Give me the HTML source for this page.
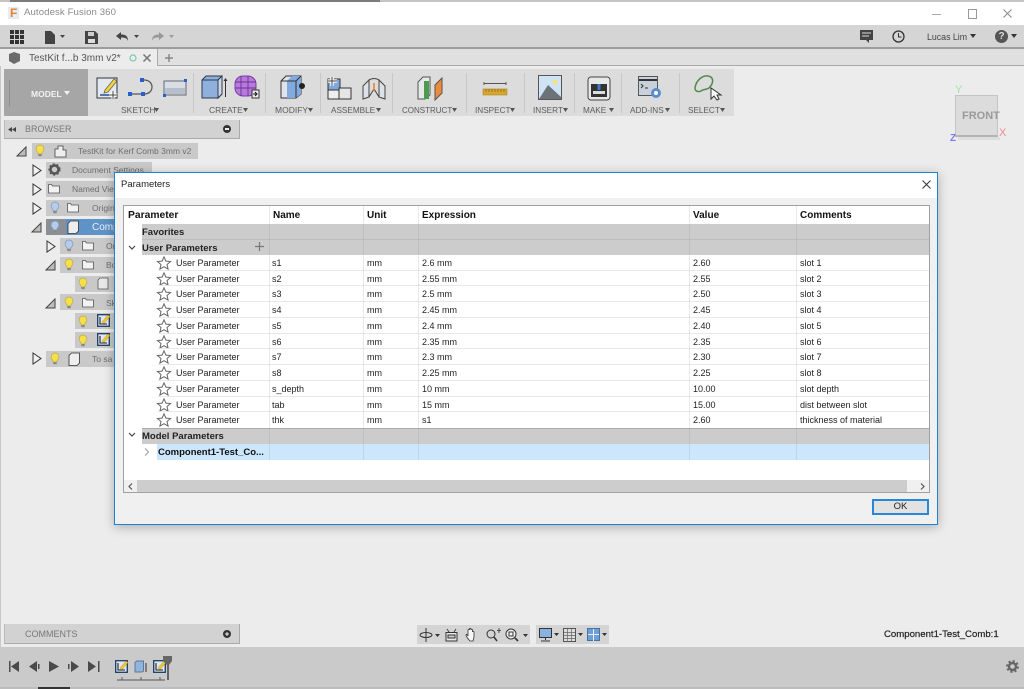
<!DOCTYPE html>
<html><head><meta charset="utf-8"><style>
html,body{margin:0;padding:0}
body{width:1024px;height:689px;overflow:hidden;position:relative;background:#ececec;font-family:"Liberation Sans",sans-serif;filter:blur(.3px)}
.a{position:absolute}
.t{position:absolute;white-space:nowrap;line-height:12px}
.rb{position:absolute;top:105px;font-size:8.5px;color:#5c5c5c;line-height:11px;white-space:nowrap}
.sep{position:absolute;top:73px;width:1px;height:40px;background:#c8c8c8}
.node{position:absolute;background:#c9c9c9;height:16px}
.nt{position:absolute;font-size:8.5px;color:#6e6e6e;white-space:nowrap;line-height:12px}
svg{position:absolute;overflow:visible}
.r{position:absolute;height:15.73px;font-size:9px;color:#222}
.r span{position:absolute;top:2px;line-height:12px;white-space:nowrap}
.ln{position:absolute;left:34px;right:0;bottom:0;height:1px;background:#e8e8e8}
.c1{left:52px}.c2{left:148px}.c3{left:243px}.c4{left:298px}.c5{left:569px}.c6{left:676px}
</style></head><body>
<svg width="0" height="0" style="position:absolute"><defs>
<g id="bulb"><path d="M5 1a4 4 0 0 1 2.500 7c-.6.6-.7 1.200-.7 2H3.200c0-.8-.1-1.400-.7-2A4 4 0 0 1 5 1z" fill="#f6e04a" stroke="#b9a94a" stroke-width=".7"/><rect x="3.300" y="10" width="3.400" height="2.200" fill="#888"/></g>
<g id="bulbb"><path d="M5 1a4 4 0 0 1 2.500 7c-.6.6-.7 1.200-.7 2H3.200c0-.8-.1-1.400-.7-2A4 4 0 0 1 5 1z" fill="#b5cdea" stroke="#7f98b8" stroke-width=".7"/><rect x="3.300" y="10" width="3.400" height="2.200" fill="#888"/></g>
<g id="fold"><path d="M.5 2.500h3l1 1.500h7v7h-11z" fill="#f2f2f2" stroke="#555" stroke-width=".8"/></g>
<g id="tri"><path d="M1 1l8 5.500-8 5.500z" fill="#f2f2f2" stroke="#333" stroke-width="1"/></g>
<g id="tro"><path d="M9 1v9H0z" fill="#bdbdbd" stroke="#444" stroke-width="1"/></g>
<g id="star"><path d="M7 .8l1.900 4.300 4.600.4-3.500 3 1.100 4.600L7 10.700l-4.100 2.400L4 8.500.5 5.500l4.600-.4z" fill="#fff" stroke="#666" stroke-width="1"/></g>
<g id="sk"><rect x=".7" y=".7" width="11.600" height="11.600" fill="#dfe6f0" stroke="#1c3c66" stroke-width="1.300"/><path d="M3 3v7h7" fill="none" stroke="#222" stroke-width="1.100"/><path d="M5 8l6-7 2 1.500-6 7z" fill="#f0cb2c" stroke="#a98c1a" stroke-width=".4"/></g>
</defs></svg>

<!-- title bar -->
<div class="a" style="left:0;top:0;width:1024px;height:25px;background:#fff"></div>
<div class="a" style="left:0;top:0;width:1024px;height:2px;background:#c4c4c4"></div>
<div class="a" style="left:10px;top:0;width:370px;height:2px;background:#7c7c7c"></div>
<div class="a" style="left:8px;top:7px;width:11px;height:12px;background:#e4edf5"></div>
<div class="t" style="left:10px;top:7px;font-size:12px;font-weight:bold;color:#e8822a">F</div>
<div class="t" style="left:24px;top:7px;font-size:9.600px;color:#8a8a8a;letter-spacing:.1px">Autodesk Fusion 360</div>
<div class="a" style="left:932px;top:14px;width:9px;height:1px;background:#aaa"></div>
<div class="a" style="left:968px;top:9px;width:7px;height:8px;border:1px solid #999"></div>
<svg style="left:1003px;top:9px" width="10" height="10"><path d="M.5.500l8 8M8.500.500l-8 8" stroke="#888" stroke-width="1"/></svg>

<!-- toolbar -->
<div class="a" style="left:0;top:25px;width:1024px;height:22px;background:#d5d5d5"></div>
<div class="a" style="left:0;top:47px;width:1024px;height:2px;background:#9c9c9c"></div>
<svg style="left:10px;top:30px" width="14" height="14"><g fill="#333"><rect width="4" height="4"/><rect x="5" width="4" height="4"/><rect x="10" width="4" height="4"/><rect y="5" width="4" height="4"/><rect x="5" y="5" width="4" height="4"/><rect x="10" y="5" width="4" height="4"/><rect y="10" width="4" height="4"/><rect x="5" y="10" width="4" height="4"/><rect x="10" y="10" width="4" height="4"/></g></svg>
<svg style="left:45px;top:31px" width="22" height="13"><path d="M0 0h6l4 4v9H0z" fill="#444"/><path d="M15 4h5l-2.500 3z" fill="#444"/></svg>
<svg style="left:85px;top:31px" width="13" height="13"><path d="M0 0h10l3 3v10H0z" fill="#444"/><rect x="3" y="1" width="6" height="4" fill="#ccc"/><rect x="3" y="8" width="7" height="4" fill="#ddd"/></svg>
<svg style="left:116px;top:32px" width="26" height="11"><path d="M0 4l5-4v2.500c4 0 7 1 7 6.500-1-3-3-3.500-7-3.500V8z" fill="#444"/><path d="M18 3h5l-2.500 3z" fill="#444"/></svg>
<svg style="left:152px;top:32px" width="26" height="11"><path d="M12 4L7 0v2.500C3 2.500 0 3.500 0 9c1-3 3-3.500 7-3.500V8z" fill="#999"/><path d="M17 3h5l-2.500 3z" fill="#999"/></svg>
<svg style="left:860px;top:30px" width="14" height="14"><path d="M0 0h13v10H9v3l-3-3H0z" fill="#444"/><path d="M2 3h9M2 6h7" stroke="#ddd"/></svg>
<svg style="left:892px;top:30px" width="13" height="13"><circle cx="6.500" cy="6.500" r="5.500" fill="none" stroke="#333" stroke-width="1.300"/><path d="M6.500 3v4h3" fill="none" stroke="#333"/></svg>
<div class="t" style="left:927px;top:31px;font-size:8.800px;color:#444">Lucas Lim</div>
<svg style="left:970px;top:34px" width="6" height="5"><path d="M0 0h6L3 4z" fill="#333"/></svg>
<div class="a" style="left:995px;top:30px;width:13px;height:13px;border-radius:50%;background:#555;color:#ddd;font-size:10px;font-weight:bold;line-height:13px;text-align:center">?</div>
<svg style="left:1011px;top:34px" width="6" height="5"><path d="M0 0h6L3 4z" fill="#333"/></svg>

<!-- tabs -->
<div class="a" style="left:0;top:49px;width:1024px;height:16px;background:#e0e0e0;border-bottom:1px solid #aaa"></div>
<div class="a" style="left:0;top:49px;width:157px;height:17px;background:#ececec"></div>
<div class="a" style="left:157px;top:49px;width:1px;height:16px;background:#aaa"></div>
<svg style="left:9px;top:52px" width="12" height="12"><path d="M0 2l5-2 6 2v7l-6 3-5-3z" fill="#6b6b6b"/></svg>
<div class="t" style="left:29px;top:53px;font-size:10px;color:#555">TestKit f...b 3mm v2*</div>
<svg style="left:129px;top:54px" width="9" height="9"><circle cx="4" cy="4" r="3" fill="none" stroke="#7fc4b0" stroke-width="1.200"/></svg>
<svg style="left:143px;top:54px" width="8" height="8"><path d="M.5.500l7 7M7.500.500l-7 7" stroke="#777" stroke-width="1.500"/></svg>
<svg style="left:164px;top:53px" width="10" height="10"><path d="M5 1v8M1 5h8" stroke="#777" stroke-width="1.200"/></svg>

<!-- ribbon -->
<div class="a" style="left:4px;top:69px;width:730px;height:47px;background:#dcdcdc"></div>
<div class="a" style="left:4px;top:69px;width:84px;height:47px;background:#a6a6a6"></div>
<div class="a" style="left:9px;top:80px;width:1px;height:26px;background:#8d8d8d"></div>
<div class="t" style="left:31px;top:88px;font-size:8.500px;font-weight:bold;color:#f3f3f3">MODEL</div>
<svg style="left:64px;top:91px" width="6" height="4"><path d="M0 0h6L3 4z" fill="#f3f3f3"/></svg>
<div class="sep" style="left:193px"></div><div class="sep" style="left:265px"></div><div class="sep" style="left:320px"></div><div class="sep" style="left:392px"></div><div class="sep" style="left:466px"></div><div class="sep" style="left:524px"></div><div class="sep" style="left:574px"></div><div class="sep" style="left:621px"></div><div class="sep" style="left:679px"></div>

<svg style="left:96px;top:77px" width="24" height="23"><rect x="1" y="1" width="20" height="20" fill="#e4e9f0" stroke="#334" stroke-width="1"/><path d="M4 18h14" stroke="#1f4f99" stroke-width="1.500"/><path d="M9 13l9-11 3 2-9 11-4 1z" fill="#f3d13a" stroke="#666" stroke-width=".8"/><path d="M17 14v8M13 18h8" stroke="#fff" stroke-width="3"/><path d="M17 14v8M13 18h8" stroke="#444"/></svg>
<svg style="left:128px;top:78px" width="26" height="20"><path d="M2 16h14c5 0 8-3 8-7s-3-7-8-7h-2" fill="none" stroke="#555" stroke-width="1.200"/><g fill="#2a5ecb"><rect x="0" y="14" width="4" height="4"/><rect x="13" y="14" width="4" height="4"/><rect x="12" y="0" width="4" height="4"/></g></svg>
<svg style="left:163px;top:79px" width="24" height="18"><rect x="1" y="2" width="22" height="14" fill="#d8dde6" stroke="#667"/><rect x="2" y="9" width="20" height="6" fill="#b8bfcc"/><rect x="21" y="0" width="3" height="3" fill="#2a5ecb"/><rect x="0" y="15" width="3" height="3" fill="#2a5ecb"/></svg>
<svg style="left:201px;top:75px" width="26" height="25"><path d="M1 5l4-4h16v18l-4 4H1z" fill="#8fb0dc" stroke="#2d3a4d"/><path d="M17 5v18M1 5h16l4-4" fill="none" stroke="#2d3a4d"/><path d="M17 5l4-4v18l-4 4z" fill="#cfd9e6" stroke="#2d3a4d"/><path d="M24.500 22V5" stroke="#333"/><path d="M22.500 6l2-3 2 3z" fill="#333"/></svg>
<svg style="left:235px;top:75px" width="26" height="25"><rect x="0" y="1" width="21" height="20" rx="8" fill="#b67ad9" stroke="#7a3ca8"/><path d="M0 7h21M0 13h21M6 1v20M13 1v20" stroke="#6e2f9c" stroke-width=".9"/><rect x="17" y="15" width="7" height="8" fill="#eee" stroke="#333"/><path d="M18 19h3M20 17l2 2-2 2" stroke="#111" fill="none"/></svg>
<svg style="left:280px;top:75px" width="26" height="25"><path d="M1 6l5-5h15v18l-5 4H1z" fill="#dfe4ea" stroke="#333"/><path d="M7 6l5-5h9v18l-5 4H7z" fill="#83aade"/><path d="M1 6h15v17M16 6l5-5" fill="none" stroke="#333"/><circle cx="22" cy="11" r="3" fill="#222"/></svg>
<svg style="left:327px;top:76px" width="25" height="24"><rect x="1" y="3" width="12" height="11" fill="#7ea7dc" stroke="#333"/><rect x="1" y="14" width="11" height="9" fill="#eee" stroke="#333"/><rect x="12" y="12" width="12" height="11" fill="#e6e6e6" stroke="#333"/><path d="M5 1v9M1 5h9" stroke="#fff" stroke-width="3.500"/><path d="M5 1v9M1 5h9" stroke="#444" stroke-width="1"/></svg>
<svg style="left:362px;top:77px" width="24" height="23"><path d="M1 9l6-6v17l-6 2zM23 9l-6-6v17l6 2z" fill="#dde2e8" stroke="#444"/><path d="M7 3c3-2 7-2 10 0M7 20l5-8 5 8" fill="none" stroke="#444"/><path d="M12 6v8" stroke="#e8822a" stroke-width="1.500"/></svg>
<svg style="left:417px;top:76px" width="26" height="24"><path d="M1 6l5-5h7v18l-5 4H1z" fill="#e8e8e8" stroke="#555"/><rect x="7" y="5" width="5" height="18" fill="#4e9a4e"/><path d="M18 9l7-7v15l-7 7z" fill="#ea8c3c" stroke="#555"/></svg>
<svg style="left:483px;top:82px" width="24" height="14"><path d="M1 1.500h22M1 0v3M23 0v3" stroke="#555"/><rect x="0" y="7" width="24" height="6" fill="#d9a72d" stroke="#a98520" stroke-width=".6"/><path d="M3 7v3M6 7v3M9 7v3M12 7v3M15 7v3M18 7v3M21 7v3" stroke="#7e6216" stroke-width=".7"/></svg>
<svg style="left:538px;top:75px" width="24" height="25"><rect x=".5" y=".5" width="23" height="24" fill="#cfe3f5" stroke="#555"/><circle cx="17" cy="7" r="2.500" fill="#f2e187"/><path d="M1 24l9-14 13 12v2z" fill="#6b7378"/></svg>
<svg style="left:587px;top:76px" width="24" height="25"><rect x="1" y="1" width="22" height="23" rx="3" fill="#e8e8e8" stroke="#444"/><rect x="4" y="8" width="16" height="13" fill="#333"/><rect x="6" y="15" width="12" height="3" fill="#ddd"/><path d="M12 8v6" stroke="#3c79c6" stroke-width="3"/></svg>
<svg style="left:638px;top:76px" width="25" height="24"><rect x=".5" y=".5" width="19" height="19" fill="#c8d0da" stroke="#555"/><path d="M1 4h18" stroke="#333" stroke-width="2"/><path d="M3 8l2 2-2 2M7 12h3" stroke="#333" fill="none"/><circle cx="18" cy="17" r="5" fill="#5a8ed0"/><circle cx="18" cy="17" r="2" fill="#fff"/></svg>
<svg style="left:693px;top:74px" width="30" height="28"><path d="M2 14C3 6 10 1 15 2c6 1 6 7 1 12-3 2-6 1-8 3-2 1-6 1-6-3z" fill="none" stroke="#4f8b4f" stroke-width="1.500"/><path d="M18 14v11l3-3 3 4 2-1-2-4h4z" fill="#fff" stroke="#333"/></svg>

<div class="rb" style="left:121px">SKETCH</div><svg style="left:154px;top:108px" width="5" height="4"><path d="M0 0h5L2.500 4z" fill="#555"/></svg>
<div class="rb" style="left:209px">CREATE</div><svg style="left:243px;top:108px" width="5" height="4"><path d="M0 0h5L2.500 4z" fill="#555"/></svg>
<div class="rb" style="left:275px">MODIFY</div><svg style="left:308px;top:108px" width="5" height="4"><path d="M0 0h5L2.500 4z" fill="#555"/></svg>
<div class="rb" style="left:331px;font-size:8.200px">ASSEMBLE</div><svg style="left:376px;top:108px" width="5" height="4"><path d="M0 0h5L2.500 4z" fill="#555"/></svg>
<div class="rb" style="left:402px;font-size:8px">CONSTRUCT</div><svg style="left:452px;top:108px" width="5" height="4"><path d="M0 0h5L2.500 4z" fill="#555"/></svg>
<div class="rb" style="left:475px;font-size:8.200px">INSPECT</div><svg style="left:510px;top:108px" width="5" height="4"><path d="M0 0h5L2.500 4z" fill="#555"/></svg>
<div class="rb" style="left:533px;font-size:8.200px">INSERT</div><svg style="left:563px;top:108px" width="5" height="4"><path d="M0 0h5L2.500 4z" fill="#555"/></svg>
<div class="rb" style="left:583px;font-size:8.200px">MAKE</div><svg style="left:609px;top:108px" width="5" height="4"><path d="M0 0h5L2.500 4z" fill="#555"/></svg>
<div class="rb" style="left:630px;font-size:8.200px">ADD-INS</div><svg style="left:665px;top:108px" width="5" height="4"><path d="M0 0h5L2.500 4z" fill="#555"/></svg>
<div class="rb" style="left:688px;font-size:8.200px">SELECT</div><svg style="left:720px;top:108px" width="5" height="4"><path d="M0 0h5L2.500 4z" fill="#555"/></svg>

<!-- view cube -->
<div class="a" style="left:955px;top:95px;width:43px;height:42px;background:#dcdcdc;border:1px solid #c4c4c4;border-bottom:2px solid #b4b4b4;box-sizing:border-box"></div>
<div class="a" style="left:958px;top:137px;width:42px;height:3px;background:#dedede"></div>
<div class="t" style="left:962px;top:110px;font-size:11px;font-weight:bold;color:#9a9a9a">FRONT</div>
<div class="t" style="left:955px;top:84px;font-size:11px;color:#9fe3a8">Y</div>
<div class="t" style="left:999px;top:127px;font-size:11px;color:#f08a8a">X</div>
<div class="t" style="left:950px;top:133px;font-size:10px;font-weight:bold;color:#7a7af0">Z</div>

<!-- left edge -->
<div class="a" style="left:0;top:66px;width:1px;height:581px;background:#c8c8c8"></div>

<!-- browser -->
<div class="a" style="left:4px;top:120px;width:236px;height:19px;background:#d2d2d2;box-shadow:inset 0 -1px #aaa,inset 1px 0 #bbb,inset -1px 0 #aaa"></div>
<svg style="left:8px;top:127px" width="8" height="5"><path d="M4 0v5L0 2.500zM8 0v5L4 2.500z" fill="#444"/></svg>
<div class="t" style="left:25px;top:123px;font-size:9px;color:#777">BROWSER</div>
<div class="a" style="left:223px;top:125px;width:8px;height:8px;border-radius:50%;background:#333"></div><div class="a" style="left:225px;top:128px;width:4px;height:1.500px;background:#eee"></div>

<svg style="left:17px;top:146px" width="10" height="10"><use href="#tro"/></svg>
<div class="node" style="left:32px;top:143px;width:166px"></div>
<svg style="left:35px;top:144px" width="11" height="13"><use href="#bulb"/></svg>
<svg style="left:54px;top:145px" width="13" height="13"><path d="M1 4h3V1h5v4h3v7H1z" fill="#eee" stroke="#444" stroke-width=".8"/></svg>
<div class="nt" style="left:78px;top:145px">TestKit for Kerf Comb 3mm v2</div>
<svg style="left:32px;top:164px" width="10" height="13"><use href="#tri"/></svg>
<div class="node" style="left:46px;top:162px;width:106px"></div>
<svg style="left:48px;top:163px" width="13" height="13"><circle cx="6.500" cy="6.500" r="4" fill="none" stroke="#555" stroke-width="2.500"/><circle cx="6.500" cy="6.500" r="5.500" fill="none" stroke="#555" stroke-width="1.200" stroke-dasharray="2 2"/></svg>
<div class="nt" style="left:72px;top:164px">Document Settings</div>
<svg style="left:32px;top:183px" width="10" height="13"><use href="#tri"/></svg>
<div class="node" style="left:46px;top:181px;width:70px"></div>
<svg style="left:48px;top:182px" width="13" height="13"><use href="#fold"/></svg>
<div class="nt" style="left:72px;top:183px">Named Views</div>
<svg style="left:32px;top:202px" width="10" height="13"><use href="#tri"/></svg>
<div class="node" style="left:46px;top:200px;width:70px"></div>
<svg style="left:50px;top:201px" width="11" height="13"><use href="#bulbb"/></svg>
<svg style="left:67px;top:201px" width="13" height="13"><use href="#fold"/></svg>
<div class="nt" style="left:92px;top:202px">Origin</div>
<svg style="left:32px;top:222px" width="10" height="10"><use href="#tro"/></svg>
<div class="node" style="left:46px;top:219px;width:70px;background:#5f93c7"></div>
<div class="a" style="left:46px;top:219px;width:20px;height:16px;background:#8a8f96"></div>
<svg style="left:50px;top:220px" width="11" height="13"><use href="#bulbb"/></svg>
<svg style="left:67px;top:220px" width="13" height="14"><path d="M1 3.500l2.500-2.500h8v10l-2.500 2.500H1z" fill="#eee" stroke="#333" stroke-width=".8"/></svg>
<div class="nt" style="left:92px;top:222px;color:#e8f0f8;font-size:10px">Comp</div>
<svg style="left:46px;top:240px" width="10" height="13"><use href="#tri"/></svg>
<div class="node" style="left:60px;top:238px;width:56px"></div>
<svg style="left:64px;top:239px" width="11" height="13"><use href="#bulbb"/></svg>
<svg style="left:82px;top:239px" width="13" height="13"><use href="#fold"/></svg>
<div class="nt" style="left:106px;top:240px">Or</div>
<svg style="left:46px;top:260px" width="10" height="10"><use href="#tro"/></svg>
<div class="node" style="left:60px;top:257px;width:56px"></div>
<svg style="left:64px;top:258px" width="11" height="13"><use href="#bulb"/></svg>
<svg style="left:82px;top:258px" width="13" height="13"><use href="#fold"/></svg>
<div class="nt" style="left:106px;top:259px">Bo</div>
<div class="node" style="left:75px;top:276px;width:41px"></div>
<svg style="left:78px;top:277px" width="11" height="13"><use href="#bulb"/></svg>
<svg style="left:97px;top:277px" width="12" height="13"><path d="M1 3l2-2h8v11H1z" fill="#e8e8e8" stroke="#555" stroke-width=".8"/></svg>
<svg style="left:46px;top:298px" width="10" height="10"><use href="#tro"/></svg>
<div class="node" style="left:60px;top:294px;width:56px"></div>
<svg style="left:64px;top:296px" width="11" height="13"><use href="#bulb"/></svg>
<svg style="left:82px;top:296px" width="13" height="13"><use href="#fold"/></svg>
<div class="nt" style="left:106px;top:297px">Sk</div>
<div class="node" style="left:75px;top:313px;width:41px"></div>
<svg style="left:78px;top:315px" width="11" height="13"><use href="#bulb"/></svg>
<svg style="left:97px;top:314px" width="13" height="13"><use href="#sk"/></svg>
<div class="node" style="left:75px;top:332px;width:41px"></div>
<svg style="left:78px;top:334px" width="11" height="13"><use href="#bulb"/></svg>
<svg style="left:97px;top:333px" width="13" height="13"><use href="#sk"/></svg>
<svg style="left:32px;top:352px" width="10" height="13"><use href="#tri"/></svg>
<div class="node" style="left:46px;top:351px;width:70px"></div>
<svg style="left:50px;top:352px" width="11" height="13"><use href="#bulb"/></svg>
<svg style="left:68px;top:352px" width="13" height="14"><path d="M1 3.500l2.500-2.500h8v10l-2.500 2.500H1z" fill="#eee" stroke="#333" stroke-width=".8"/></svg>
<div class="nt" style="left:92px;top:353px">To sa</div>

<!-- dialog -->
<div class="a" style="left:114px;top:172px;width:824px;height:353px;box-sizing:border-box;border:1px solid #1b82d6;background:#f0f0f0;box-shadow:0 2px 10px rgba(0,0,0,.28)">
  <div class="a" style="left:0;top:0;width:822px;height:25px;background:#fff"></div>
  <div class="t" style="left:6px;top:6px;font-size:9.500px;color:#222">Parameters</div>
  <svg style="left:807px;top:7px" width="9" height="9"><path d="M.5.500l8 8M8.500.500l-8 8" stroke="#333" stroke-width="1"/></svg>
  <!-- table -->
  <div class="a" style="left:8px;top:32px;width:807px;height:288px;box-sizing:border-box;border:1px solid #a0a0a0;background:#fff;overflow:hidden">
    <div class="t" style="left:4px;top:4px;font-size:10.300px;font-weight:bold;color:#111">Parameter</div>
    <div class="t" style="left:149px;top:4px;font-size:10px;font-weight:bold;color:#111">Name</div>
    <div class="t" style="left:243px;top:4px;font-size:10px;font-weight:bold;color:#111">Unit</div>
    <div class="t" style="left:298px;top:4px;font-size:10px;font-weight:bold;color:#111">Expression</div>
    <div class="t" style="left:569px;top:4px;font-size:10px;font-weight:bold;color:#111">Value</div>
    <div class="t" style="left:676px;top:4px;font-size:10px;font-weight:bold;color:#111">Comments</div>

    <div class="a" style="left:18px;top:18px;width:787px;height:31px;background:#cccccc"></div>
    <div class="a" style="left:18px;top:33px;width:787px;height:1px;background:#bcbcbc"></div>
    <div class="t" style="left:18px;top:21px;font-size:9.500px;font-weight:bold;color:#222">Favorites</div>
    <div class="t" style="left:18px;top:37px;font-size:9.500px;font-weight:bold;color:#222">User Parameters</div>
    <svg style="left:4px;top:39px" width="8" height="6"><path d="M1 1l3 3 3-3" fill="none" stroke="#444" stroke-width="1.200"/></svg>
    <svg style="left:131px;top:36px" width="9" height="9"><path d="M4.500 0v9M0 4.500h9" stroke="#777" stroke-width="1.200"/></svg>

    <div class="r" style="left:0;width:805px;top:49px"><svg style="left:33px;top:1px" width="14" height="14"><use href="#star"/></svg><span class="c1">User Parameter</span><span class="c2">s1</span><span class="c3">mm</span><span class="c4">2.6 mm</span><span class="c5">2.60</span><span class="c6">slot 1</span><i class="ln"></i></div>
    <div class="r" style="left:0;width:805px;top:64.730px"><svg style="left:33px;top:1px" width="14" height="14"><use href="#star"/></svg><span class="c1">User Parameter</span><span class="c2">s2</span><span class="c3">mm</span><span class="c4">2.55 mm</span><span class="c5">2.55</span><span class="c6">slot 2</span><i class="ln"></i></div>
    <div class="r" style="left:0;width:805px;top:80.460px"><svg style="left:33px;top:1px" width="14" height="14"><use href="#star"/></svg><span class="c1">User Parameter</span><span class="c2">s3</span><span class="c3">mm</span><span class="c4">2.5 mm</span><span class="c5">2.50</span><span class="c6">slot 3</span><i class="ln"></i></div>
    <div class="r" style="left:0;width:805px;top:96.190px"><svg style="left:33px;top:1px" width="14" height="14"><use href="#star"/></svg><span class="c1">User Parameter</span><span class="c2">s4</span><span class="c3">mm</span><span class="c4">2.45 mm</span><span class="c5">2.45</span><span class="c6">slot 4</span><i class="ln"></i></div>
    <div class="r" style="left:0;width:805px;top:111.920px"><svg style="left:33px;top:1px" width="14" height="14"><use href="#star"/></svg><span class="c1">User Parameter</span><span class="c2">s5</span><span class="c3">mm</span><span class="c4">2.4 mm</span><span class="c5">2.40</span><span class="c6">slot 5</span><i class="ln"></i></div>
    <div class="r" style="left:0;width:805px;top:127.650px"><svg style="left:33px;top:1px" width="14" height="14"><use href="#star"/></svg><span class="c1">User Parameter</span><span class="c2">s6</span><span class="c3">mm</span><span class="c4">2.35 mm</span><span class="c5">2.35</span><span class="c6">slot 6</span><i class="ln"></i></div>
    <div class="r" style="left:0;width:805px;top:143.380px"><svg style="left:33px;top:1px" width="14" height="14"><use href="#star"/></svg><span class="c1">User Parameter</span><span class="c2">s7</span><span class="c3">mm</span><span class="c4">2.3 mm</span><span class="c5">2.30</span><span class="c6">slot 7</span><i class="ln"></i></div>
    <div class="r" style="left:0;width:805px;top:159.110px"><svg style="left:33px;top:1px" width="14" height="14"><use href="#star"/></svg><span class="c1">User Parameter</span><span class="c2">s8</span><span class="c3">mm</span><span class="c4">2.25 mm</span><span class="c5">2.25</span><span class="c6">slot 8</span><i class="ln"></i></div>
    <div class="r" style="left:0;width:805px;top:174.840px"><svg style="left:33px;top:1px" width="14" height="14"><use href="#star"/></svg><span class="c1">User Parameter</span><span class="c2">s_depth</span><span class="c3">mm</span><span class="c4">10 mm</span><span class="c5">10.00</span><span class="c6">slot depth</span><i class="ln"></i></div>
    <div class="r" style="left:0;width:805px;top:190.570px"><svg style="left:33px;top:1px" width="14" height="14"><use href="#star"/></svg><span class="c1">User Parameter</span><span class="c2">tab</span><span class="c3">mm</span><span class="c4">15 mm</span><span class="c5">15.00</span><span class="c6">dist between slot</span><i class="ln"></i></div>
    <div class="r" style="left:0;width:805px;top:206.300px"><svg style="left:33px;top:1px" width="14" height="14"><use href="#star"/></svg><span class="c1">User Parameter</span><span class="c2">thk</span><span class="c3">mm</span><span class="c4">s1</span><span class="c5">2.60</span><span class="c6">thickness of material</span></div>

    <div class="a" style="left:18px;top:222px;width:787px;height:16px;background:#cccccc;border-top:1px solid #aaa;box-sizing:border-box"></div>
    <div class="t" style="left:18px;top:225px;font-size:9.500px;font-weight:bold;color:#222">Model Parameters</div>
    <svg style="left:4px;top:226px" width="8" height="6"><path d="M1 1l3 3 3-3" fill="none" stroke="#444" stroke-width="1.200"/></svg>
    <div class="a" style="left:33px;top:238px;width:772px;height:16px;background:#cce6fb"></div>
    <svg style="left:20px;top:242px" width="6" height="8"><path d="M1 .5l3.500 3.500L1 7.500" fill="none" stroke="#999" stroke-width="1"/></svg>
    <div class="t" style="left:34px;top:241px;font-size:9.500px;font-weight:bold;color:#111">Component1-Test_Co...</div>

    <div class="a" style="left:145px;top:0;width:1px;height:254px;background:rgba(150,150,150,.22)"></div>
    <div class="a" style="left:239px;top:0;width:1px;height:254px;background:rgba(150,150,150,.22)"></div>
    <div class="a" style="left:294px;top:0;width:1px;height:254px;background:rgba(150,150,150,.22)"></div>
    <div class="a" style="left:565px;top:0;width:1px;height:254px;background:rgba(150,150,150,.22)"></div>
    <div class="a" style="left:672px;top:0;width:1px;height:254px;background:rgba(150,150,150,.22)"></div>

    <div class="a" style="left:0;top:274px;width:805px;height:12px;background:#f0f0f0"></div>
    <div class="a" style="left:13px;top:274px;width:770px;height:12px;background:#cdcdcd"></div>
    <svg style="left:4px;top:277px" width="5" height="7"><path d="M4 .5L1 3.500l3 3" fill="none" stroke="#555" stroke-width="1.200"/></svg>
    <svg style="left:796px;top:277px" width="5" height="7"><path d="M1 .5l3 3-3 3" fill="none" stroke="#555" stroke-width="1.200"/></svg>
  </div>
  <div class="a" style="left:757px;top:326px;width:57px;height:16px;box-sizing:border-box;border:2px solid #2a86d8;background:#e2e2e2;text-align:center;font-size:9.500px;line-height:12px;color:#222">OK</div>
</div>

<!-- comments -->
<div class="a" style="left:4px;top:624px;width:236px;height:20px;background:#d2d2d2;box-shadow:inset 0 -1px #aaa,inset 1px 0 #bbb,inset -1px 0 #aaa"></div>
<div class="t" style="left:25px;top:628px;font-size:9px;color:#777">COMMENTS</div>
<div class="a" style="left:223px;top:630px;width:8px;height:8px;border-radius:50%;background:#333"></div>
<svg style="left:223px;top:630px" width="8" height="8"><path d="M4 2v4M2 4h4" stroke="#eee"/></svg>

<!-- nav bars -->
<div class="a" style="left:417px;top:625px;width:113px;height:19px;background:#d4d4d4"></div>
<div class="a" style="left:536px;top:625px;width:73px;height:19px;background:#d4d4d4"></div>
<svg style="left:420px;top:628px" width="110" height="14" fill="none" stroke="#333">
<ellipse cx="6" cy="7" rx="6" ry="2.500"/><path d="M6 0v14"/><path d="M15 6h5l-2.500 3z" fill="#333" stroke="none"/>
<rect x="26" y="4.500" width="11" height="8.500" fill="#e8e8e8"/><rect x="28" y="7" width="7" height="3" fill="#ccc"/><path d="M29 4l-2-3M34 4l2-3" stroke-width=".8"/>
<path d="M50 13c-2-2-4-5-4-6s1-1 2 1V2c0-1 1.500-1 1.500 0V1c0-1 1.500-1 1.500 0v1c0-1 1.500-1 1.500 0v2c0-1 1.500-1 1.500 0v5l-1 4z" fill="#f6f6f6" stroke-width=".8"/>
<circle cx="71" cy="6" r="4"/><path d="M74 9l3 4" stroke-width="1.500"/><path d="M79 0v5M77 2.500h4" stroke-width=".8"/>
<circle cx="91" cy="6" r="5" fill="#f2f2f2"/><rect x="89" y="4" width="4" height="4"/><path d="M95 10l3 3" stroke-width="1.600"/><path d="M103 6h5l-2.500 3z" fill="#333" stroke="none"/>
</svg>
<svg style="left:539px;top:628px" width="70" height="14">
<rect x=".5" y=".5" width="12" height="9" fill="#8ab2e0" stroke="#333"/><path d="M6.500 10v2M2 13h9" stroke="#333"/><path d="M15 5h5l-2.500 3z" fill="#333"/>
<rect x="24.500" y=".5" width="12" height="13" fill="#ddd" stroke="#555"/><path d="M28.500 1v13M32.500 1v13M25 4.500h11M25 7.500h11M25 10.500h11" stroke="#666" stroke-width=".7"/><path d="M39 5h5l-2.500 3z" fill="#333"/>
<rect x="48.500" y=".5" width="12" height="12" fill="#6d9fd8" stroke="#4c6f9b"/><path d="M54.500 1v12M49 6.500h11" stroke="#eef"/><path d="M63 5h5l-2.500 3z" fill="#333"/>
</svg>
<div class="t" style="left:884px;top:629px;font-size:9.600px;color:#222;-webkit-text-stroke:.2px #222">Component1-Test_Comb:1</div>

<!-- timeline -->
<div class="a" style="left:0;top:647px;width:1024px;height:42px;background:#cacaca"></div>
<div class="a" style="left:0;top:687px;width:1024px;height:2px;background:#bdbdbd"></div>
<div class="a" style="left:38px;top:687px;width:32px;height:2px;background:#333"></div>
<svg style="left:9px;top:660px" width="92" height="13" fill="#4a4a4a">
<path d="M0 1h1.500v11H0zM10 1v11L2 6.500z"/><path d="M20 6.500L28 1v11zM29 4h1.500v5H29z"/><path d="M40 1l10 5.500L40 12z"/><path d="M59 4h1.500v5H59zM62 1l8 5.500L62 12z"/><path d="M79 1l8 5.500L79 12zM89 1h1.500v11H89z"/>
</svg>
<svg style="left:115px;top:660px" width="13" height="13"><use href="#sk"/></svg>
<svg style="left:134px;top:660px" width="13" height="13"><path d="M1 2.500l1.500-1.500h7v10l-1.500 1H1z" fill="#8fb4de" stroke="#5f7994"/><path d="M12 12V3" stroke="#333"/></svg>
<svg style="left:153px;top:660px" width="13" height="13"><use href="#sk"/></svg>
<svg style="left:116px;top:656px" width="60" height="26"><path d="M1 24h48M6 21v3M25 21v3M44 21v3" stroke="#555" fill="none" stroke-width=".9"/><path d="M47 0h9v5l-3 4v15h-2V9l-4-4z" fill="#666"/></svg>
<svg style="left:1006px;top:660px" width="13" height="13"><circle cx="6.500" cy="6.500" r="3.500" fill="none" stroke="#666" stroke-width="2.400"/><circle cx="6.500" cy="6.500" r="5.500" fill="none" stroke="#666" stroke-width="1.800" stroke-dasharray="2.200 2.100"/></svg>
</body></html>
